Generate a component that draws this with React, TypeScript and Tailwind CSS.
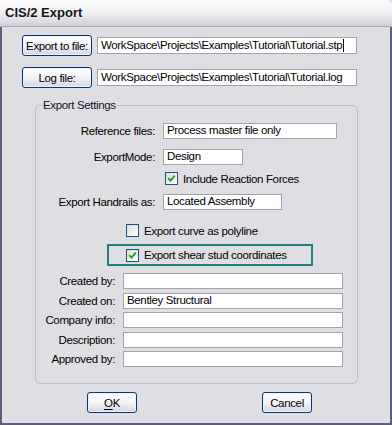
const Btn = ({ className, children }: { className: string; children: React.ReactNode }) => (
  <button
    className={`flex h-[21px] items-center justify-center whitespace-nowrap rounded-[3px] border border-[#003c74] bg-gradient-to-b from-white via-[#f4f4f7] to-[#d5d4e3] text-black shadow-[inset_0_0_0_1px_#eef0fb] ${className}`}
  >
    {children}
  </button>
);

const Check = ({ checked }: { checked?: boolean }) => (
  <span className="flex h-[13px] w-[13px] shrink-0 items-center justify-center border border-[#1c5180] bg-gradient-to-br from-[#dcdcd7] to-white">
    {checked && (
      <svg width="9" height="9" viewBox="0 0 9 9">
        <path d="M1.2 4.2 L3.5 6.6 L7.8 1.6" fill="none" stroke="#21a121" strokeWidth="1.9" />
      </svg>
    )}
  </span>
);

const Field = ({ className, children }: { className: string; children?: React.ReactNode }) => (
  <div
    className={`flex h-[16px] items-center overflow-hidden whitespace-nowrap border border-[#a3a3ab] bg-white pl-[3px] leading-none ${className}`}
  >
    {children}
  </div>
);

const infoRows = [
  { label: "Created by:", value: "" },
  { label: "Created on:", value: "Bentley Structural" },
  { label: "Company info:", value: "" },
  { label: "Description:", value: "" },
  { label: "Approved by:", value: "" },
];

export default function App() {
  return (
    <div className="flex h-[425px] w-[392px] flex-col overflow-hidden whitespace-nowrap bg-[#dfdfe3] font-['Liberation_Sans',Arial,sans-serif] text-[11.5px] leading-[14px] tracking-[-0.35px] text-black">
      <div className="flex h-[27px] shrink-0 items-center rounded-tr-[6px] border-b border-[#a9a9b9] bg-gradient-to-b from-[#fdfdfd] via-[#efeff3] to-[#d0d0db] pl-[5px] text-[13px] font-bold tracking-normal text-[#161616]">
        CIS/2 Export
      </div>

      <div className="flex flex-1 flex-col border-x-2 border-b-2 border-[#5f5f7c]">
        <div className="ml-[20px] mt-[8px] flex items-center gap-[5px]">
          <Btn className="w-[70px]">Export to file:</Btn>
          <Field className="h-[17px] w-[260px]">
            {"WorkSpace\\Projects\\Examples\\Tutorial\\Tutorial.stp"}
            <span className="ml-[1px] inline-block h-[13px] w-px bg-black" />
          </Field>
        </div>
        <div className="ml-[20px] mt-[11px] flex items-center gap-[5px]">
          <Btn className="w-[70px]">Log file:</Btn>
          <Field className="h-[17px] w-[260px]">
            {"WorkSpace\\Projects\\Examples\\Tutorial\\Tutorial.log"}
          </Field>
        </div>

        <fieldset className="ml-[33px] mt-[10px] w-[323px] rounded-[5px] border border-[#bfbfc6] pb-[16px]">
          <legend className="ml-[6px] px-[1px] leading-[14px] text-[#10102a]">Export Settings</legend>

          <div className="mt-[11px] flex items-center">
            <span className="w-[119px] text-right">Reference files:</span>
            <Field className="ml-[8px] w-[174px]">Process master file only</Field>
          </div>
          <div className="mt-[10px] flex items-center">
            <span className="w-[119px] text-right">ExportMode:</span>
            <Field className="ml-[8px] w-[80px]">Design</Field>
          </div>
          <div className="mt-[7px] flex h-[13px] items-center gap-[5px] pl-[129px]">
            <Check checked />
            <span>Include Reaction Forces</span>
          </div>
          <div className="mt-[9px] flex items-center">
            <span className="w-[119px] text-right">Export Handrails as:</span>
            <Field className="ml-[8px] w-[119px]">Located Assembly</Field>
          </div>
          <div className="mt-[14px] flex h-[13px] items-center gap-[5px] pl-[90px]">
            <Check />
            <span>Export curve as polyline</span>
          </div>
          <div className="ml-[71px] mt-[7px] flex h-[22px] w-[206px] items-center gap-[5px] border-2 border-[#1f8080] pl-[17px]">
            <Check checked />
            <span>Export shear stud coordinates</span>
          </div>

          <div className="mt-[7px] flex flex-col gap-[3.5px]">
            {infoRows.map((row) => (
              <div key={row.label} className="flex items-center">
                <span className="w-[79px] text-right">{row.label}</span>
                <Field className="ml-[8px] w-[220px]">{row.value}</Field>
              </div>
            ))}
          </div>
        </fieldset>

        <div className="mt-[8px] flex">
          <Btn className="ml-[85px] w-[50px]">
            <span className="underline underline-offset-2">O</span>K
          </Btn>
          <Btn className="ml-[125px] w-[50px]">Cancel</Btn>
        </div>
      </div>
    </div>
  );
}
